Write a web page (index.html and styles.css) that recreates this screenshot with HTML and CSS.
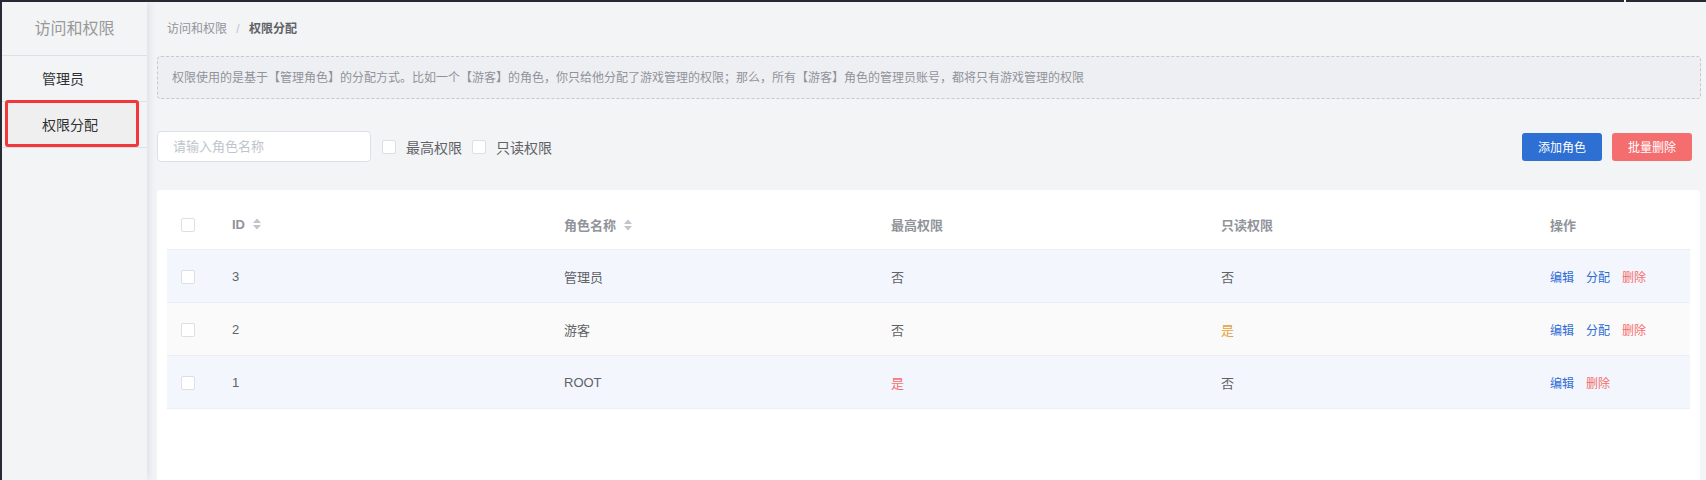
FILE: index.html
```html
<!DOCTYPE html>
<html lang="zh-CN">
<head>
  <meta charset="UTF-8" />
  <title>权限分配</title>
  <link rel="stylesheet" href="styles.css">
</head>
<body>
  <div class="topbar"></div>
  <div class="app">
    <!-- 侧边栏 -->
    <aside class="sidebar">
      <div class="sidebar-title">访问和权限</div>
      <div class="menu-item">管理员</div>
      <div class="menu-item menu-item-active"><span>权限分配</span></div>
    </aside>

    <main class="main">
      <div class="breadcrumb">
        <span class="crumb">访问和权限</span>
        <span class="crumb-sep">/</span>
        <span class="crumb crumb-current">权限分配</span>
      </div>

      <div class="notice">权限使用的是基于【管理角色】的分配方式。比如一个【游客】的角色，你只给他分配了游戏管理的权限；那么，所有【游客】角色的管理员账号，都将只有游戏管理的权限</div>

      <div class="toolbar">
        <input class="search" type="text" placeholder="请输入角色名称" />
        <label class="check"><span class="box"></span>最高权限</label>
        <label class="check"><span class="box"></span>只读权限</label>
        <div class="spacer"></div>
        <button class="btn btn-primary">添加角色</button>
        <button class="btn btn-danger">批量删除</button>
      </div>

      <div class="card">
        <table class="grid">
          <colgroup>
            <col style="width:51px">
            <col style="width:332px">
            <col style="width:327px">
            <col style="width:330px">
            <col style="width:329px">
            <col>
          </colgroup>
          <thead>
            <tr>
              <th><span class="box"></span></th>
              <th>ID <svg class="sort" width="10" height="14" viewBox="0 0 10 14"><path d="M1 6L5 1.5L9 6Z M1 8L5 12.5L9 8Z" fill="#c0c4cc"/></svg></th>
              <th>角色名称 <svg class="sort" width="10" height="14" viewBox="0 0 10 14"><path d="M1 6L5 1.5L9 6Z M1 8L5 12.5L9 8Z" fill="#c0c4cc"/></svg></th>
              <th>最高权限</th>
              <th>只读权限</th>
              <th>操作</th>
            </tr>
          </thead>
          <tbody>
            <tr class="row-blue">
              <td><span class="box"></span></td>
              <td>3</td>
              <td>管理员</td>
              <td>否</td>
              <td>否</td>
              <td class="ops"><a class="op">编辑</a><a class="op">分配</a><a class="op op-del">删除</a></td>
            </tr>
            <tr class="row-grey">
              <td><span class="box"></span></td>
              <td>2</td>
              <td>游客</td>
              <td>否</td>
              <td class="warn">是</td>
              <td class="ops"><a class="op">编辑</a><a class="op">分配</a><a class="op op-del">删除</a></td>
            </tr>
            <tr class="row-blue">
              <td><span class="box"></span></td>
              <td>1</td>
              <td>ROOT</td>
              <td class="danger">是</td>
              <td>否</td>
              <td class="ops"><a class="op">编辑</a><a class="op op-del">删除</a></td>
            </tr>
          </tbody>
        </table>
      </div>
    </main>
  </div>
</body>
</html>
```

FILE: styles.css
```css
body {
  margin: 0;
  height: 480px;
  overflow: hidden;
  background: #f3f4f6;
  font-family: "Liberation Sans", "Noto Sans CJK SC", sans-serif;
  color: #606266;
}

.topbar {
  height: 2px;
  background: linear-gradient(to right, #262a33 1624px, #ffffff 1624px, #ffffff 1626px, #262a33 1626px);
}

.app {
  display: flex;
  height: 478px;
  overflow: hidden;
}

/* 侧边栏 */
.sidebar {
  width: 147px;
  flex-shrink: 0;
  box-sizing: border-box;
  border-left: 2px solid #262a33;
  background: #f3f4f6;
  position: relative;
  z-index: 1;
  box-shadow: 3px 0 7px rgba(40, 60, 110, 0.09);
}

.sidebar-title {
  height: 53px;
  line-height: 53px;
  text-align: center;
  font-size: 16px;
  color: #999999;
  border-bottom: 1px solid #dcdfe6;
}

.menu-item {
  height: 45px;
  line-height: 47px;
  padding-left: 40px;
  font-size: 14px;
  color: #303133;
  border-bottom: 1px solid #dcdfe6;
}

.menu-item-active {
  position: relative;
}

.menu-item-active::before {
  content: "";
  position: absolute;
  left: 3px;
  right: 8px;
  top: -2px;
  bottom: 0;
  border: 3px solid #f2363a;
  border-radius: 3px;
  background: #efefef;
}

.menu-item-active span {
  position: relative;
}

/* 主区域 */
.main {
  flex: 1;
  padding: 0 5px 0 10px;
  overflow: hidden;
}

.breadcrumb {
  height: 54px;
  line-height: 54px;
  font-size: 12px;
  padding-left: 10px;
}

.crumb {
  color: #909399;
}

.crumb-sep {
  color: #c0c4cc;
  margin: 0 6px;
}

.crumb-current {
  color: #606266;
  font-weight: bold;
}

.notice {
  height: 41px;
  line-height: 42px;
  padding-left: 14px;
  border: 1px dashed #c6c9cf;
  border-radius: 4px;
  background: #eeeff3;
  font-size: 12px;
  color: #909399;
}

.toolbar {
  display: flex;
  align-items: center;
  margin-top: 32px;
  height: 31px;
  padding-right: 9px;
}

.search {
  width: 214px;
  height: 31px;
  box-sizing: border-box;
  border: 1px solid #dcdfe6;
  border-radius: 4px;
  padding: 0 15px;
  font-family: inherit;
  font-size: 13px;
  background: #fff;
  outline: none;
}

.search::placeholder {
  color: #c0c4cc;
}

.check {
  display: flex;
  align-items: center;
  gap: 10px;
  margin-left: 11px;
  font-size: 14px;
  color: #606266;
}

.check + .check {
  margin-left: 10px;
}

.box {
  display: inline-block;
  width: 14px;
  height: 14px;
  box-sizing: border-box;
  border: 1px solid #dcdfe6;
  border-radius: 2px;
  background: #fff;
  vertical-align: middle;
}

.spacer {
  flex: 1;
}

.btn {
  width: 80px;
  height: 28px;
  border: none;
  border-radius: 3px;
  color: #fff;
  font-family: inherit;
  font-size: 12px;
  margin-left: 10px;
  cursor: pointer;
}

.btn-primary {
  background: #2d6fd3;
}

.btn-danger {
  background: #f56e6f;
}

/* 表格 */
.card {
  margin-top: 28px;
  height: 300px;
  margin-right: 1px;
  background: #fff;
  border-radius: 4px;
  padding: 10px;
}

.grid {
  width: 100%;
  table-layout: fixed;
  border-collapse: collapse;
  font-size: 13px;
}

.grid th {
  height: 49px;
  text-align: left;
  padding: 0 0 0 14px;
  color: #909399;
  font-weight: bold;
  border-bottom: 1px solid #ebeef5;
}

.grid td {
  height: 52px;
  padding: 0 0 0 14px;
  color: #606266;
  border-bottom: 1px solid #ebeef5;
}

.sort {
  vertical-align: -2px;
  margin-left: 3px;
}

.row-blue td {
  background: #f3f7fd;
}

.row-grey td {
  background: #fafafa;
}

.grid td.danger {
  color: #f56c6c;
}

.grid td.warn {
  color: #e6a23c;
}

.op {
  font-size: 12px;
  color: #2f6bd5;
  margin-right: 12px;
  cursor: pointer;
}

.op-del {
  color: #f56c6c;
}
```
